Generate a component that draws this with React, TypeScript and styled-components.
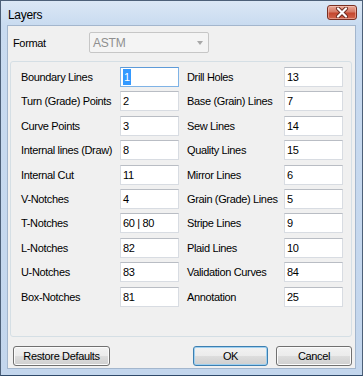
import React from "react";
import { createGlobalStyle, styled } from "styled-components";

const GlobalStyle = createGlobalStyle`
  html, body {
    margin: 0;
    padding: 0;
    background: #ffffff;
  }
  * {
    box-sizing: border-box;
  }
`;

const Window = styled.div`
  width: 363px;
  height: 376px;
  display: flex;
  flex-direction: column;
  border: 1px solid #4d6078;
  border-bottom-color: #2f4a6a;
  background: linear-gradient(#dbe7f5 0px, #c9dbf0 24px, #c3d6ed 100%);
  font-family: "Liberation Sans", Arial, sans-serif;
  font-size: 11px;
  letter-spacing: -0.35px;
  color: #000;
`;

const TitleBar = styled.div`
  height: 24px;
  display: flex;
  align-items: flex-start;
  justify-content: space-between;
  padding: 0 5px 0 7px;
`;

const Title = styled.span`
  font-size: 12px;
  letter-spacing: -0.3px;
  line-height: 29px;
  color: #000;
`;

const CloseButton = styled.div`
  margin-top: 4px;
  width: 30px;
  height: 15px;
  border: 1px solid #7a2f22;
  border-radius: 3px;
  background: linear-gradient(#e9a796 0%, #d67a66 45%, #c4462e 55%, #d2654d 100%);
  box-shadow: inset 0 0 0 1px rgba(255, 215, 205, 0.45);
  display: flex;
  align-items: center;
  justify-content: center;
`;

const Client = styled.div`
  flex: 1;
  margin: 0 6px 6px;
  border: 1px solid #a3b6cd;
  background: #f0f0f0;
  display: flex;
  flex-direction: column;
`;

const FormatRow = styled.div`
  display: flex;
  align-items: center;
  height: 21px;
  margin-top: 6px;
  padding-left: 5px;
`;

const FormatLabel = styled.span`
  width: 76px;
`;

const Combo = styled.div`
  width: 120px;
  height: 21px;
  border: 1px solid #c6c6c6;
  border-radius: 2px;
  background: #f4f4f4;
  color: #8f8f8f;
  font-size: 12px;
  letter-spacing: -0.2px;
  display: flex;
  align-items: center;
  justify-content: space-between;
  padding: 0 5px 0 3px;
`;

const Arrow = styled.span`
  width: 0;
  height: 0;
  border-left: 3.5px solid transparent;
  border-right: 3.5px solid transparent;
  border-top: 4px solid #a8a8a8;
  margin-top: 1px;
`;

const Group = styled.div`
  margin: 8px 3px 0 2px;
  height: 276px;
  border: 1px solid #d5dfe5;
  border-radius: 3px;
  padding: 5px 0 0 10px;
`;

const FieldGrid = styled.div`
  display: grid;
  grid-template-columns: 158px 156px;
  grid-template-rows: repeat(10, 20px);
  grid-auto-flow: column;
  column-gap: 8px;
  row-gap: 4.4px;
`;

const Field = styled.div<{ $labelWidth: number }>`
  display: grid;
  grid-template-columns: ${(p) => p.$labelWidth}px 59px;
  align-items: center;
`;

const Label = styled.span`
  white-space: nowrap;
  line-height: 20px;
`;

const Input = styled.div<{ $focused?: boolean }>`
  height: 20px;
  background: #fff;
  border: 1px solid ${(p) => (p.$focused ? "#7fb3e6" : "#d8dce2")};
  border-top-color: ${(p) => (p.$focused ? "#5d9ad8" : "#b9bdc4")};
  padding-left: 2px;
  display: flex;
  align-items: center;
  white-space: nowrap;
`;

const Selected = styled.span`
  background: #3399ff;
  color: #fff;
  padding: 0 1px;
  line-height: 16px;
`;

const ButtonRow = styled.div`
  display: flex;
  margin: 9px 3px 0 5px;
  gap: 8px;
`;

const Button = styled.div<{ $width: number; $default?: boolean }>`
  width: ${(p) => p.$width}px;
  height: 20px;
  border: 1px solid ${(p) => (p.$default ? "#3c7fb1" : "#707070")};
  border-radius: 3px;
  background: linear-gradient(#f2f2f2 0%, #ebebeb 50%, #dddddd 50%, #cfcfcf 100%);
  box-shadow: inset 0 0 0 1px ${(p) => (p.$default ? "#9fd0f0" : "#fbfbfb")};
  display: flex;
  align-items: center;
  justify-content: center;
  font-size: 11px;
`;

const Spacer = styled.div`
  flex: 1;
`;

const left: [string, string][] = [
  ["Boundary Lines", "1"],
  ["Turn (Grade) Points", "2"],
  ["Curve Points", "3"],
  ["Internal lines (Draw)", "8"],
  ["Internal Cut", "11"],
  ["V-Notches", "4"],
  ["T-Notches", "60 | 80"],
  ["L-Notches", "82"],
  ["U-Notches", "83"],
  ["Box-Notches", "81"],
];

const right: [string, string][] = [
  ["Drill Holes", "13"],
  ["Base (Grain) Lines", "7"],
  ["Sew Lines", "14"],
  ["Quality Lines", "15"],
  ["Mirror Lines", "6"],
  ["Grain (Grade) Lines", "5"],
  ["Stripe Lines", "9"],
  ["Plaid Lines", "10"],
  ["Validation Curves", "84"],
  ["Annotation", "25"],
];

function App() {
  return (
    <>
      <GlobalStyle />
      <Window>
        <TitleBar>
          <Title>Layers</Title>
          <CloseButton>
            <svg width="14" height="11" viewBox="0 0 14 11">
              <path
                d="M3 1.5 L11 9.5 M11 1.5 L3 9.5"
                stroke="#6a2a20"
                strokeWidth="4"
                strokeLinecap="round"
              />
              <path
                d="M3 1.5 L11 9.5 M11 1.5 L3 9.5"
                stroke="#ffffff"
                strokeWidth="2.2"
                strokeLinecap="round"
              />
            </svg>
          </CloseButton>
        </TitleBar>
        <Client>
          <FormatRow>
            <FormatLabel>Format</FormatLabel>
            <Combo>
              <span>ASTM</span>
              <Arrow />
            </Combo>
          </FormatRow>
          <Group>
            <FieldGrid>
              {left.map(([label, value], i) => (
                <Field key={label} $labelWidth={99}>
                  <Label>{label}</Label>
                  <Input $focused={i === 0}>
                    {i === 0 ? <Selected>{value}</Selected> : value}
                  </Input>
                </Field>
              ))}
              {right.map(([label, value]) => (
                <Field key={label} $labelWidth={97}>
                  <Label>{label}</Label>
                  <Input>{value}</Input>
                </Field>
              ))}
            </FieldGrid>
          </Group>
          <ButtonRow>
            <Button $width={97}>Restore Defaults</Button>
            <Spacer />
            <Button $width={75} $default>
              OK
            </Button>
            <Button $width={76}>Cancel</Button>
          </ButtonRow>
        </Client>
      </Window>
    </>
  );
}

export default App;
